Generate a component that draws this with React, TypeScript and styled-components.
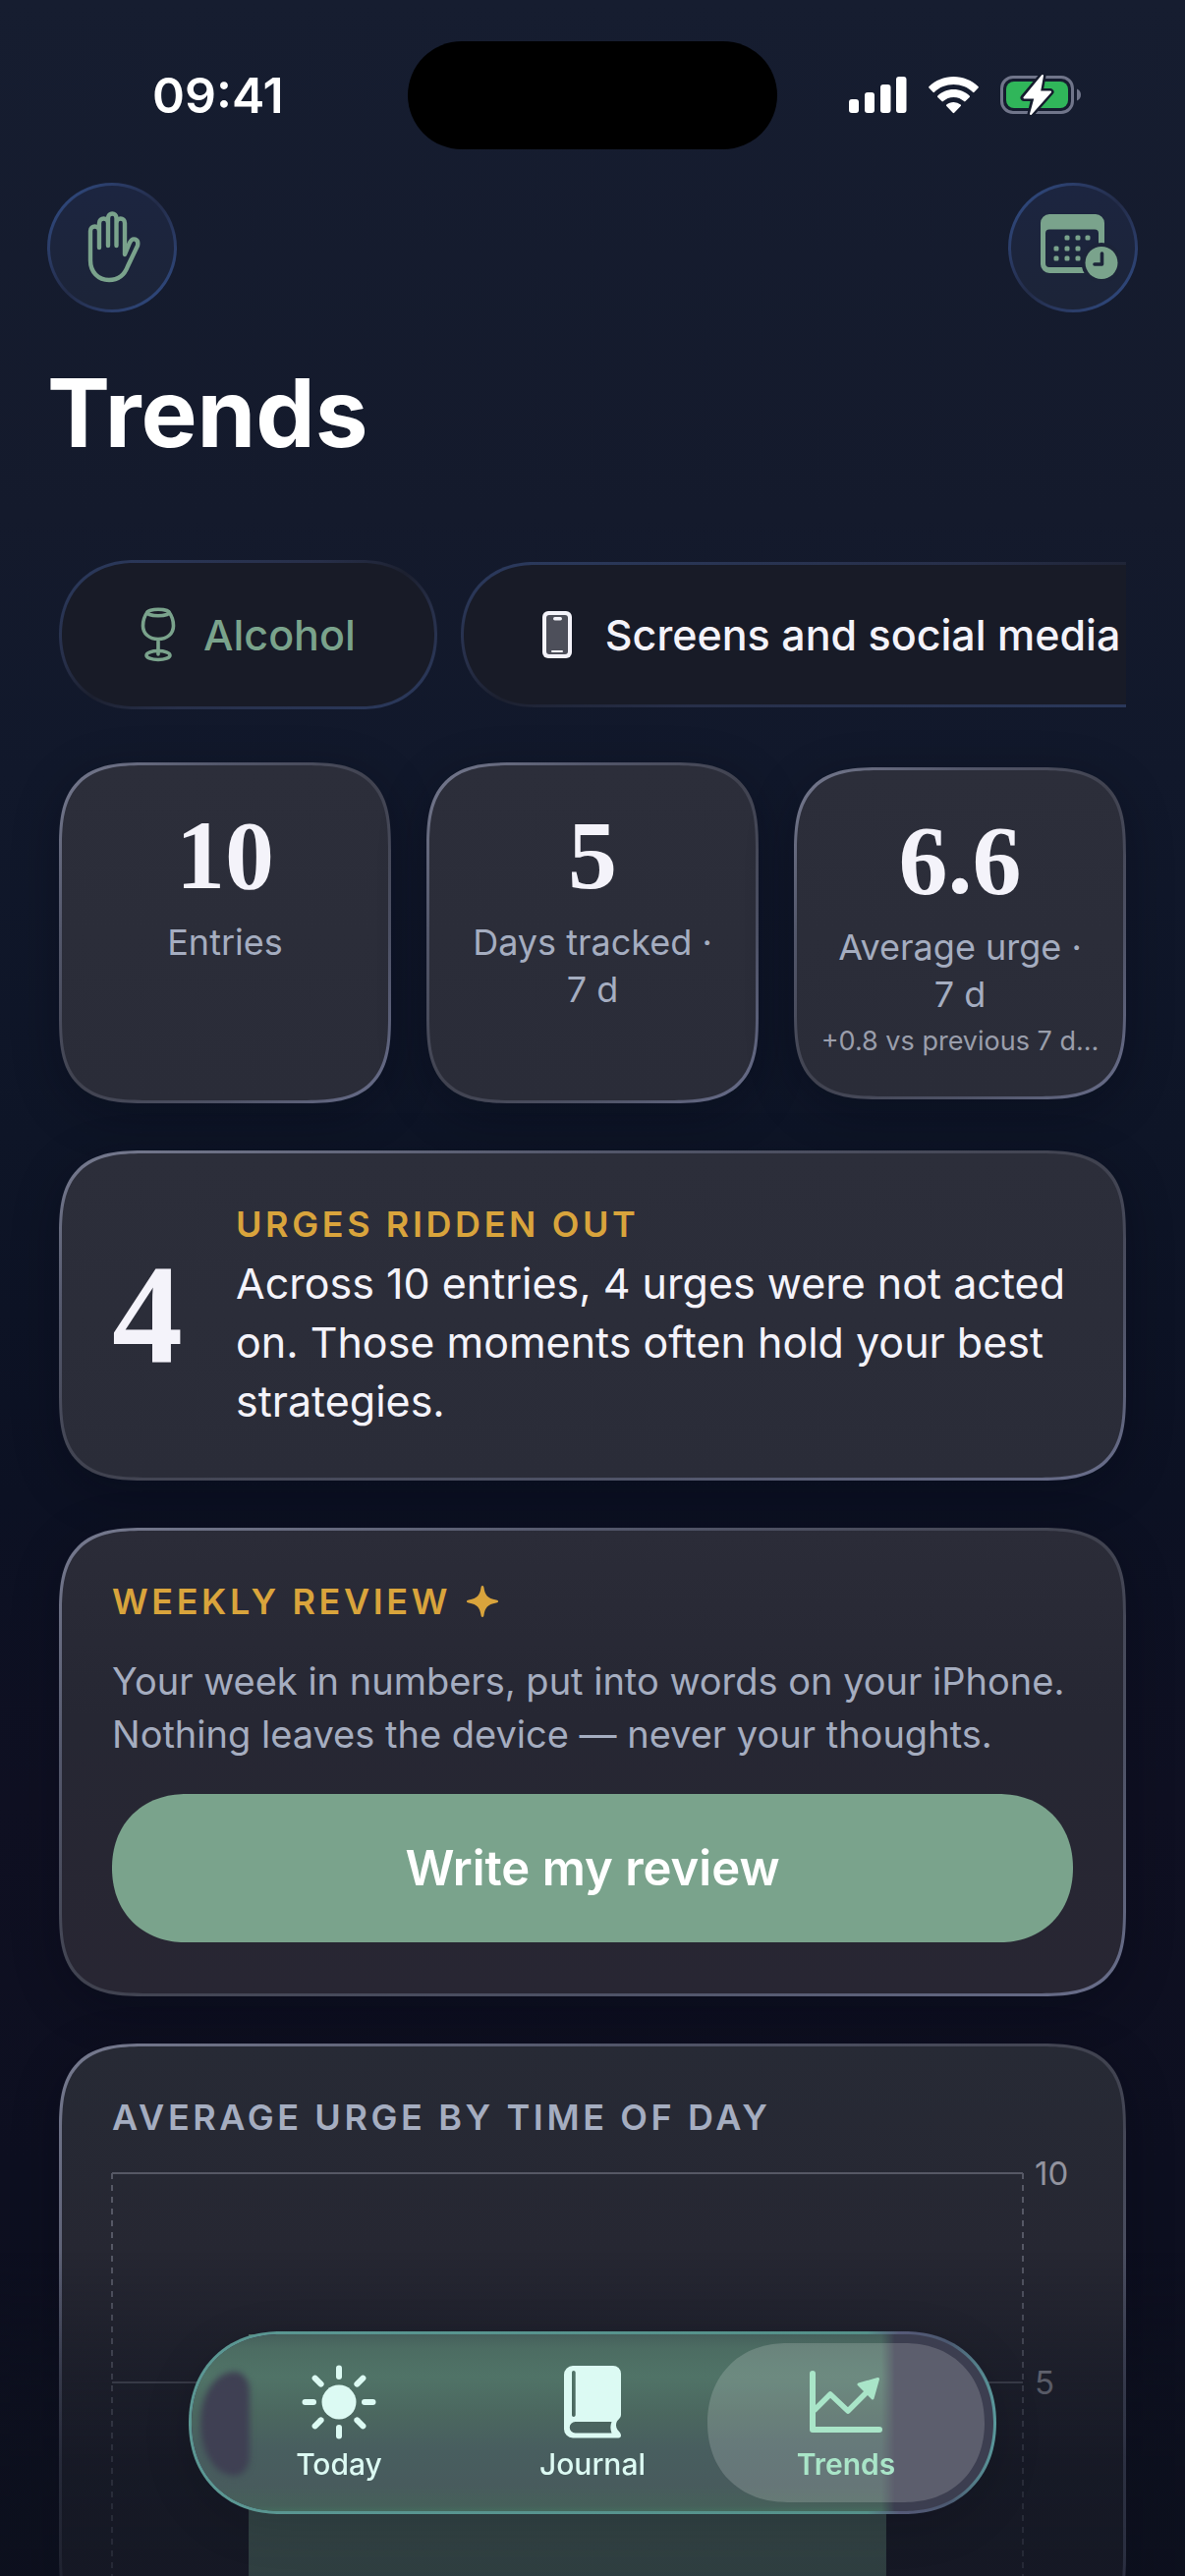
import React from "react";
import styled, { createGlobalStyle, css } from "styled-components";

const color = {
  text: "#f4f3fa",
  muted: "#a5adc0",
  faint: "#9a9eab",
  gold: "#d9a43c",
  sage: "#7aa38c",
  mint: "#a9e5c8",
  ice: "#dcfaf3",
};

const GlobalStyle = createGlobalStyle`
  *, *::before, *::after { box-sizing: border-box; }
  html, body { margin: 0; background: #0d0e1e; }
  body { font-family: Inter, "Liberation Sans", sans-serif; color: ${color.text}; }
  h1, h2, p { margin: 0; }
  button { font: inherit; color: inherit; border: 0; padding: 0; background: none; cursor: pointer; }
  svg { display: block; flex: none; }
`;

const smoothCard = css`
  border-radius: 70px;
  @supports (corner-shape: squircle) {
    border-radius: 90px;
    corner-shape: superellipse(1.55);
  }
`;

const smoothCapsule = css`
  border-radius: 999px;
  corner-shape: superellipse(1.1);
`;

const Screen = styled.div`
  height: 100vh;
  overflow: hidden;
  display: flex;
  flex-direction: column;
  background: linear-gradient(#161d30 0%, #141a2c 20%, #11182b 30%, #0e1527 44%, #0c1123 58%, #0f1022 70%, #0d0f20 84%, #0d0f1e 100%);
`;

const StatusBar = styled.header`
  display: grid;
  grid-template-columns: 1fr 376px 1fr;
  align-items: center;
  flex: none;
  height: 110px;
  margin-top: 42px;
`;

const Clock = styled.time`
  padding-left: 155px;
  font-size: 50px;
  line-height: 60px;
  font-weight: 600;
  color: #fff;
`;

const Island = styled.div`
  height: 110px;
  border-radius: 55px;
  background: #000;
`;

const StatusIcons = styled.div`
  display: flex;
  align-items: center;
  justify-content: flex-end;
  gap: 22px;
  padding-right: 106px;
`;

const Toolbar = styled.div`
  display: flex;
  justify-content: space-between;
  flex: none;
  padding: 34px 48px 0;
`;

const RoundButton = styled.button`
  display: grid;
  place-items: center;
  width: 132px;
  height: 132px;
  border: 3px solid transparent;
  border-radius: 50%;
  color: ${color.sage};
  background:
    linear-gradient(#1c2540, #1c2438) padding-box,
    linear-gradient(to bottom right, #31508a, #2a3a63 30%, #232c49 50%, #2a3a63 70%, #31508a) border-box;
`;

const Title = styled.h1`
  flex: none;
  padding: 42px 48px 0;
  font-size: 96px;
  line-height: 120px;
  font-weight: 700;
  color: #fff;
`;

const Main = styled.main`
  display: flex;
  flex-direction: column;
  gap: 48px;
  flex: none;
  padding: 90px 60px 0;
`;

const Chips = styled.div`
  display: flex;
  align-items: center;
  gap: 24px;
  height: 152px;
  margin-bottom: 6px;
  overflow: hidden;
`;

const Chip = styled.button<{ $selected?: boolean }>`
  display: flex;
  align-items: center;
  justify-content: center;
  gap: ${(p) => (p.$selected ? 28 : 34)}px;
  flex: none;
  height: ${(p) => (p.$selected ? 152 : 148)}px;
  padding: 0 80px;
  border: 3px solid transparent;
  background:
    linear-gradient(#181b27, #181b27) padding-box,
    linear-gradient(to bottom right, #2b3a5e, #272f49 35%, #1c202f 50%, #272f49 65%, #2b3a5e) border-box;
  color: ${(p) => (p.$selected ? color.sage : color.text)};
  font-size: 43px;
  line-height: 54px;
  font-weight: 500;
  white-space: nowrap;
  ${smoothCapsule}
`;

const surface = css<{ $fill?: string }>`
  border: 3px solid transparent;
  background:
    linear-gradient(${(p) => p.$fill || "#2c2e3a, #2a2c38"}) padding-box,
    linear-gradient(to bottom right, #777b90, #53576b 25%, #40424f 50%, #4e5266 75%, #6a6f8c) border-box;
  box-shadow: 0 12px 48px rgba(2, 5, 16, 0.3);
  ${smoothCard}
`;

const Stats = styled.div`
  display: grid;
  grid-template-columns: repeat(3, 1fr);
  align-items: center;
  gap: 36px;
`;

const Stat = styled.section<{ $tall?: boolean }>`
  min-height: ${(p) => (p.$tall ? 347 : 338)}px;
  padding: 40px 24px 36px;
  text-align: center;
  ${surface}
`;

const Figure = styled.div<{ $large?: boolean }>`
  font-family: "Liberation Serif", serif;
  font-weight: 700;
  font-size: ${(p) => (p.$large ? 144 : 100)}px;
  line-height: ${(p) => (p.$large ? 144 : 104)}px;
`;

const StatLabel = styled.p`
  margin-top: 12px;
  font-size: 36px;
  line-height: 48px;
  color: ${color.muted};
`;

const StatDelta = styled.p`
  margin-top: 4px;
  font-size: 27px;
  line-height: 40px;
  white-space: nowrap;
  color: ${color.faint};
`;

const Card = styled.section`
  padding: 48px 51px;
  ${surface}
`;

const SplitCard = styled(Card)`
  display: flex;
  align-items: center;
  gap: 54px;
`;

const Eyebrow = styled.h2<{ $muted?: boolean }>`
  display: flex;
  align-items: center;
  gap: 16px;
  font-size: 36px;
  line-height: 48px;
  font-weight: 600;
  letter-spacing: 0.1em;
  text-transform: uppercase;
  color: ${(p) => (p.$muted ? color.muted : color.gold)};
`;

const Body = styled.p`
  margin-top: 6px;
  font-size: 43px;
  line-height: 60px;
`;

const Note = styled.p`
  margin-top: 30px;
  font-size: 38px;
  line-height: 54px;
  color: ${color.muted};
`;

const PrimaryButton = styled.button`
  display: block;
  width: 100%;
  height: 151px;
  margin: 34px 0 4px;
  background: ${color.sage};
  color: #fff;
  font-size: 49px;
  line-height: 60px;
  font-weight: 600;
  ${smoothCapsule}
`;

const Chart = styled.div`
  display: flex;
  gap: 12px;
  height: 426px;
  margin-top: 33px;
`;

const Plot = styled.svg`
  flex: 1;
  min-width: 0;
  height: 100%;
  overflow: visible;
`;

const Axis = styled.div`
  display: flex;
  flex-direction: column;
  gap: 173px;
  width: 39px;
  margin-top: -20px;
  font-size: 33px;
  line-height: 40px;
  color: #92939e;
`;

const Fade = styled.div`
  position: fixed;
  left: 0;
  right: 0;
  bottom: 0;
  height: 330px;
  pointer-events: none;
  background: linear-gradient(rgba(13, 17, 30, 0), rgba(13, 17, 30, 0.42) 40%, rgba(13, 17, 30, 0.6) 65%, rgba(13, 17, 30, 0.66));
`;

const TabBar = styled.nav`
  position: fixed;
  left: 50%;
  bottom: 63px;
  transform: translateX(-50%);
  display: flex;
  width: 822px;
  padding: 9px;
  border: 3px solid transparent;
  background:
    linear-gradient(#3c3e50, #3c3e50) padding-box,
    linear-gradient(to right, #5b9793, #55918a 84%, #565a78 88%, #4b5870 94%, #5a9a9c) border-box;
  box-shadow: 0 12px 48px rgba(2, 5, 16, 0.15);
  ${smoothCapsule}

  &::before {
    content: "";
    position: absolute;
    inset: 0;
    border-radius: inherit;
    corner-shape: inherit;
    background: linear-gradient(#46605c, #4c6c62 8%, #507367 24%, #4b675f 45%, #485e5f 65%, #485b5d 85%, #46605a 97%, #456a5e);
    mask-image: linear-gradient(to right, #000 702px, transparent 716px);
  }

  &::after {
    content: "";
    position: absolute;
    left: 9px;
    top: 38px;
    width: 50px;
    height: 106px;
    border-radius: 36px 16px 16px 36px / 53px 20px 20px 53px;
    background: #3f4053;
    filter: blur(3px);
  }
`;

const Tab = styled.button<{ $active?: boolean }>`
  position: relative;
  z-index: 1;
  display: flex;
  flex: 1;
  flex-direction: column;
  align-items: center;
  justify-content: center;
  gap: 7px;
  height: 162px;
  margin: 0 -12px;
  color: ${(p) => (p.$active ? color.mint : color.ice)};
  background: ${(p) => (p.$active ? "rgba(255, 255, 255, 0.17)" : "none")};
  font-size: 30px;
  line-height: 36px;
  font-weight: ${(p) => (p.$active ? 600 : 500)};
  ${smoothCapsule}

  &:first-child { margin-left: 0; }
  &:last-child { margin-right: 0; }
`;

const IconSlot = styled.span`
  display: grid;
  place-items: center;
  height: 76px;
`;

const SignalIcon = () => (
  <svg width="59" height="38" viewBox="0 0 59 38" fill="#fff" aria-hidden="true">
    <rect x="0" y="23" width="10" height="14" rx="3" />
    <rect x="16" y="16" width="10" height="21" rx="3" />
    <rect x="32" y="8" width="10.500" height="29" rx="3" />
    <rect x="48" y="0" width="10.500" height="37" rx="3" />
  </svg>
);

const WifiIcon = () => (
  <svg width="51" height="38" viewBox="0 0 51 38" fill="#fff" aria-hidden="true">
    <path d="M25.500 0C15.800 0 7 3.800.5 10a1 1 0 0 0 0 1.500l4 4.200a1 1 0 0 0 1.500 0C11 10.800 18 8 25.500 8S40 10.800 45 15.700a1 1 0 0 0 1.500 0l4-4.200a1 1 0 0 0 0-1.500C44 3.800 35.200 0 25.500 0Z" />
    <path d="M25.500 13c-6.300 0-12 2.500-16.200 6.400a1 1 0 0 0 0 1.500l4.200 4.200a1 1 0 0 0 1.400 0c2.800-2.500 6.500-4.100 10.600-4.100s7.800 1.600 10.600 4.100a1 1 0 0 0 1.400 0l4.200-4.200a1 1 0 0 0 0-1.500C37.500 15.500 31.800 13 25.500 13Z" />
    <path d="M25.500 26c-2.800 0-5.300 1-7.200 2.600a1 1 0 0 0 0 1.500l6.400 6.700a1 1 0 0 0 1.500 0l6.500-6.700a1 1 0 0 0 0-1.500A11 11 0 0 0 25.500 26Z" />
  </svg>
);

const BatteryIcon = () => (
  <svg width="82" height="42" viewBox="0 0 82 42" aria-hidden="true">
    <rect x="1.500" y="2.500" width="72" height="42" rx="11.500" fill="none" />
    <rect x="1.500" y="2.500" width="72" height="36" rx="11.500" fill="none" stroke="#70758a" strokeWidth="3" />
    <path d="M78 14.500c2.500 1 4 3.300 4 6s-1.500 5-4 6Z" fill="#70758a" />
    <rect x="6" y="7" width="63" height="27" rx="8" fill="#30b65a" />
    <path d="M43 1 24 23.500h11L31 40 51 17.500H40Z" fill="#fff" stroke="#151b2d" strokeWidth="7" strokeLinejoin="round" />
    <path d="M43 1 24.500 23.500h11L31 40 51 17.500H40Z" fill="#fff" stroke="#fff" strokeWidth="2" strokeLinejoin="round" />
  </svg>
);

const HandIcon = () => (
  <svg width="62" height="76" viewBox="-5 0 62 76" fill="none" stroke="currentColor" strokeWidth="4.400" strokeLinecap="round" strokeLinejoin="round" aria-hidden="true">
    <path d="M13 38V21c0-6-9-6-9 0v30c0 12 8 20 19 20 10 0 16-6 19-14l10-21c1.500-7-5-9-8-3l-5 12V13c0-6-8.500-6-8.500 0M30.500 36V8c0-6-8.500-6-8.500 0v28M22 13c0-6-9-6-9 0v10" />
  </svg>
);

const CalendarIcon = () => (
  <svg width="92" height="70" viewBox="-12 0 92 70" fill="currentColor" aria-hidden="true">
    <path fillRule="evenodd" d="M10 1h47a9 9 0 0 1 9 9v42a9 9 0 0 1-9 9H10a9 9 0 0 1-9-9V10a9 9 0 0 1 9-9Zm0 15.500a4 4 0 0 0-4 4V51a4 4 0 0 0 4 4h46a4 4 0 0 0 4-4V20.500a4 4 0 0 0-4-4Z" />
    {[[28, 25], [39, 25], [49, 25], [17, 36], [28, 36], [39, 36], [17, 46], [28, 46], [39, 46]].map(([x, y]) => (
      <rect key={`${x}-${y}`} x={x - 2.5} y={y - 2.5} width="5" height="5" rx="1.500" />
    ))}
    <circle cx="63" cy="50.500" r="20.500" fill="#1c2439" />
    <circle cx="63" cy="50.500" r="16.500" />
    <path d="M63.500 41v11H56" fill="none" stroke="#1c2439" strokeWidth="3.600" strokeLinecap="round" strokeLinejoin="round" />
  </svg>
);

const GlassIcon = () => (
  <svg width="36" height="56" viewBox="0 0 36 56" fill="none" stroke="currentColor" strokeWidth="3.600" strokeLinecap="round" aria-hidden="true">
    <ellipse cx="18" cy="5.500" rx="11" ry="3.200" />
    <path d="M7 5C4 9 2.500 14 2.500 19c0 8 6.500 13.500 15.500 13.500S33.500 27 33.500 19C33.500 14 32 9 29 5M18 33v15" />
    <ellipse cx="18" cy="49" rx="12" ry="4.500" />
  </svg>
);

const PhoneIcon = () => (
  <svg width="30" height="48" viewBox="0 0 30 48" aria-hidden="true">
    <rect width="30" height="48" rx="6" fill="#f4f3fa" />
    <rect x="4" y="4" width="22" height="40" rx="3" fill="#4d4f5a" />
    <rect x="11" y="6" width="9" height="3.500" rx="1.700" fill="#f4f3fa" />
    <rect x="9" y="40" width="12" height="2" rx="1" fill="#f4f3fa" />
  </svg>
);

const SparkIcon = () => (
  <svg width="32" height="32" viewBox="0 0 32 32" fill="currentColor" aria-hidden="true">
    <path d="M16 0c1 0 1.300.8 1.500 2 1.200 7.500 3.500 11 12.500 12.500 1.200.2 2 .5 2 1.500s-.8 1.300-2 1.500C21 19 18.700 22.500 17.500 30c-.2 1.200-.5 2-1.500 2s-1.300-.8-1.500-2C13.300 22.500 11 19 2 17.500.8 17.300 0 17 0 16s.8-1.300 2-1.500C11 13 13.300 9.500 14.500 2c.2-1.200.5-2 1.500-2Z" />
  </svg>
);

const SunIcon = () => (
  <svg width="76" height="76" viewBox="-38 -38 76 76" aria-hidden="true">
    <circle r="17.500" fill="currentColor" />
    {[0, 45, 90, 135, 180, 225, 270, 315].map((angle) => (
      <path key={angle} d="M0-34.500v8.500" transform={`rotate(${angle})`} stroke="currentColor" strokeWidth="6" strokeLinecap="round" />
    ))}
  </svg>
);

const BookIcon = () => (
  <svg width="58" height="74" viewBox="0 0 58 74" fill="currentColor" fillRule="evenodd" aria-hidden="true">
    <path d="M9 0h41a8 8 0 0 1 8 8v42c0 4-5 5-5 10.500S58 67 58 71c0 1.500-1 2.500-2.500 2.500H9a9 9 0 0 1-9-9V9a9 9 0 0 1 9-9Zm.8 5A1.800 1.800 0 0 0 8 6.800V50c0 1.200.8 2 1.800 2s1.900-.8 1.900-2V6.800A1.900 1.900 0 0 0 9.800 5Zm1.700 52a5.700 5.700 0 0 0 0 11.500h37c-1.500-4-1.500-7.500 0-11.500Z" />
  </svg>
);

const TrendIcon = () => (
  <svg width="76" height="66" viewBox="0 0 76 66" fill="none" stroke="currentColor" strokeWidth="6" strokeLinecap="round" strokeLinejoin="round" aria-hidden="true">
    <path d="M4 4v57h68" />
    <path d="M6 41 22 25l18 17 19-19" strokeWidth="5.500" />
    <path d="m51 15 19.500-5.500L65 29Z" fill="currentColor" strokeWidth="3" />
  </svg>
);

const UrgeChart = () => (
  <Chart>
    <Plot role="img" aria-label="Average urge by time of day">
      <rect x="15%" y="164" width="70%" height="262" fill={color.sage} fillOpacity="0.9" />
      <g stroke="#565865" strokeWidth="2">
        <line x1="0" x2="100%" y1="0" y2="0" />
        <line x1="0" x2="100%" y1="213" y2="213" />
        <line x1="0" x2="0" y1="0" y2="426" strokeDasharray="6 6" />
        <line x1="100%" x2="100%" y1="0" y2="426" strokeDasharray="6 6" />
      </g>
    </Plot>
    <Axis>
      <span>10</span>
      <span>5</span>
    </Axis>
  </Chart>
);

export default function App() {
  return (
    <>
      <GlobalStyle />
      <Screen>
        <StatusBar>
          <Clock>09:41</Clock>
          <Island />
          <StatusIcons>
            <SignalIcon />
            <WifiIcon />
            <BatteryIcon />
          </StatusIcons>
        </StatusBar>
        <Toolbar>
          <RoundButton aria-label="Pause">
            <HandIcon />
          </RoundButton>
          <RoundButton aria-label="History">
            <CalendarIcon />
          </RoundButton>
        </Toolbar>
        <Title>Trends</Title>
        <Main>
          <Chips>
            <Chip $selected aria-pressed="true">
              <GlassIcon />
              Alcohol
            </Chip>
            <Chip aria-pressed="false">
              <PhoneIcon />
              Screens and social media
            </Chip>
          </Chips>
          <Stats>
            <Stat $tall>
              <Figure>10</Figure>
              <StatLabel>Entries</StatLabel>
            </Stat>
            <Stat $tall>
              <Figure>5</Figure>
              <StatLabel>Days tracked ·<br />7 d</StatLabel>
            </Stat>
            <Stat>
              <Figure>6.6</Figure>
              <StatLabel>Average urge ·<br />7 d</StatLabel>
              <StatDelta>+0.8 vs previous 7 d…</StatDelta>
            </Stat>
          </Stats>
          <SplitCard>
            <Figure $large>4</Figure>
            <div>
              <Eyebrow>Urges ridden out</Eyebrow>
              <Body>Across 10 entries, 4 urges were not acted on. Those moments often hold your best strategies.</Body>
            </div>
          </SplitCard>
          <Card $fill="#2b2c38, #262733 40%, #282633">
            <Eyebrow>
              Weekly review
              <SparkIcon />
            </Eyebrow>
            <Note>Your week in numbers, put into words on your iPhone. Nothing leaves the device — never your thoughts.</Note>
            <PrimaryButton>Write my review</PrimaryButton>
          </Card>
          <Card $fill="#272a35, #262732 35%, #262732">
            <Eyebrow $muted>Average urge by time of day</Eyebrow>
            <UrgeChart />
          </Card>
        </Main>
      </Screen>
      <Fade />
      <TabBar>
        <Tab>
          <IconSlot><SunIcon /></IconSlot>
          Today
        </Tab>
        <Tab>
          <IconSlot><BookIcon /></IconSlot>
          Journal
        </Tab>
        <Tab $active aria-current="page">
          <IconSlot><TrendIcon /></IconSlot>
          Trends
        </Tab>
      </TabBar>
    </>
  );
}
